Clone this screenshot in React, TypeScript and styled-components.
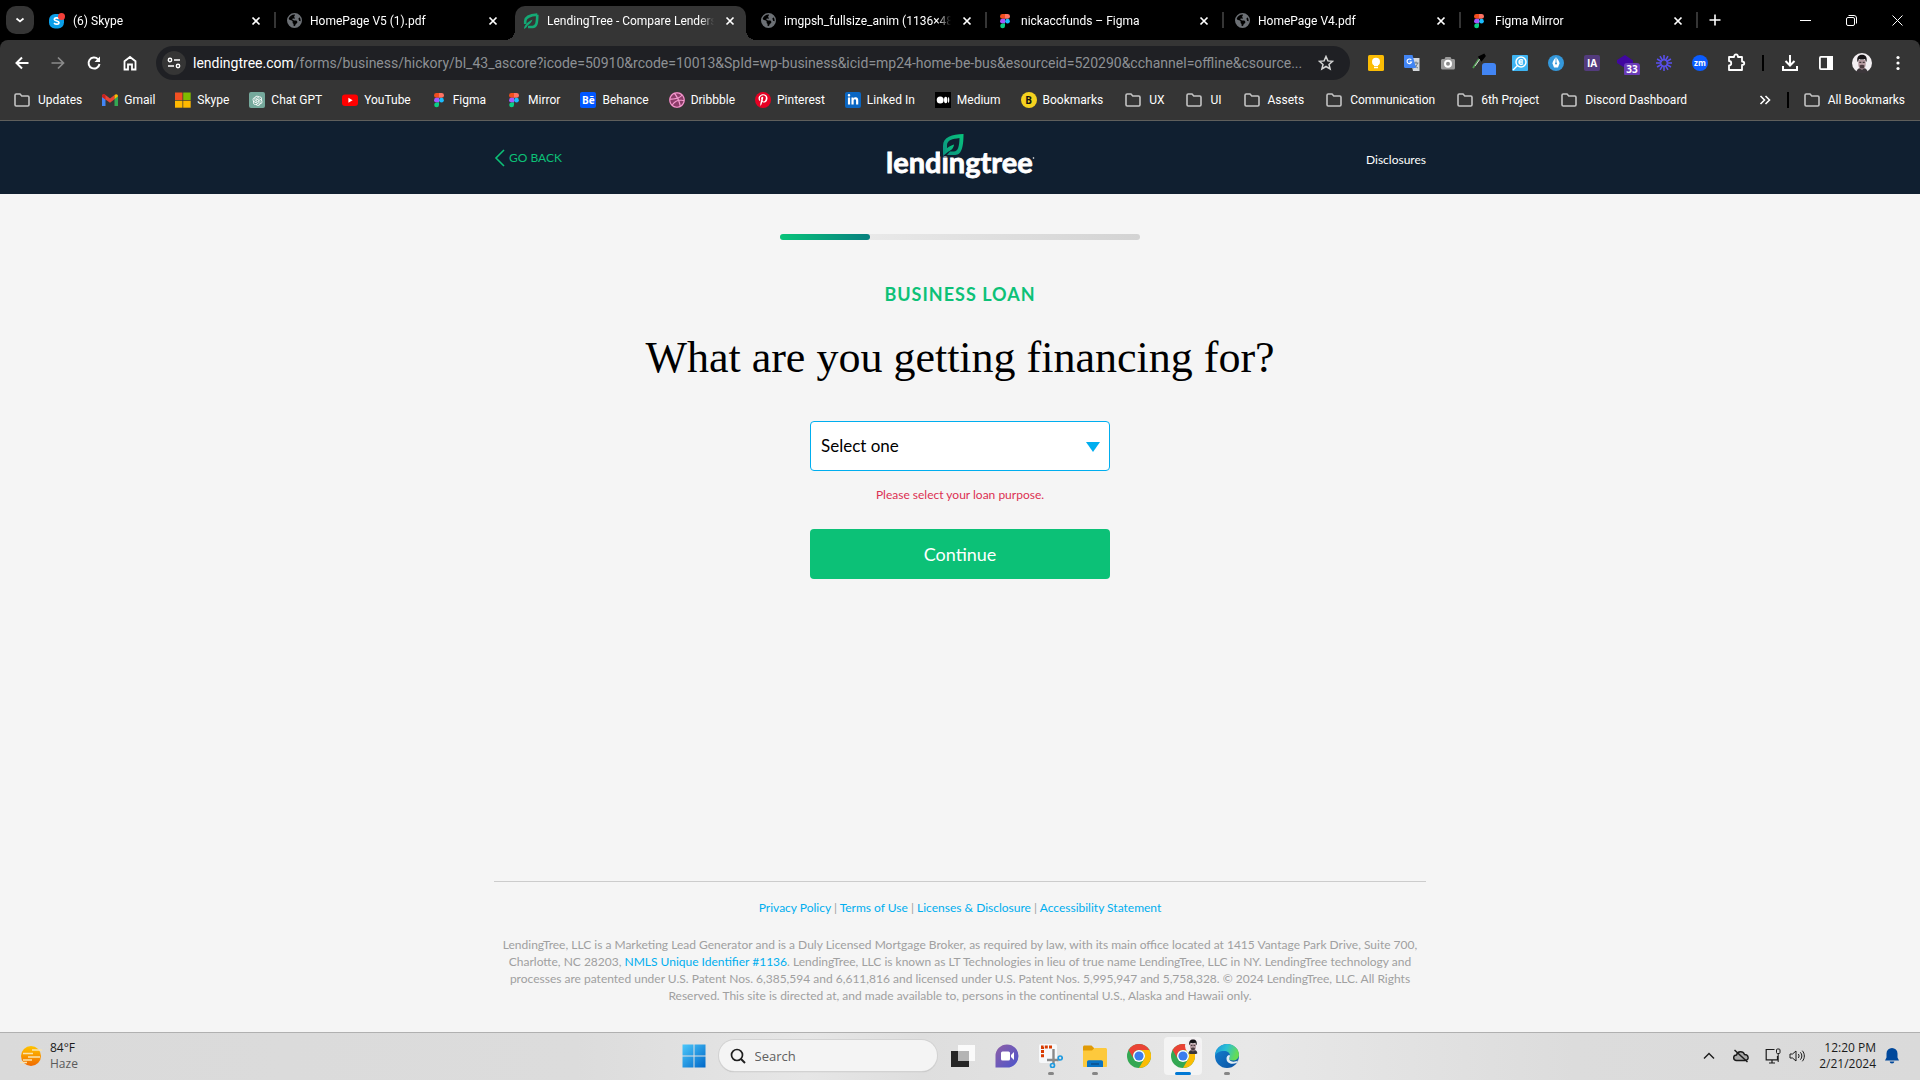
import React from "react";
import styled, { createGlobalStyle, css } from "styled-components";
import { FaDribbble, FaPinterestP, FaLinkedinIn, FaEarthAmericas } from "react-icons/fa6";
import { AiOutlineOpenAI } from "react-icons/ai";

const uiFont = `Roboto, "Open Sans", sans-serif`;
const osFont = `"Open Sans", "Noto Sans", sans-serif`;
const siteFont = `Lato, "Open Sans", sans-serif`;
const green = "#0cc177";
const blue = "#00aeef";

const GlobalStyle = createGlobalStyle`
  *, *::before, *::after { box-sizing: border-box; }
  body { margin: 0; background: #f5f5f5; }
  button { font: inherit; color: inherit; border: 0; padding: 0; background: none; cursor: pointer; }
  a { text-decoration: none; color: inherit; }
  svg { display: block; flex: none; }
`;

const Screen = styled.div`
  display: flex;
  flex-direction: column;
  min-height: 100vh;
`;

/* ---------- Browser chrome ---------- */

const Browser = styled.header`
  background: #000;
  color: #fff;
  font: 12px/16px ${uiFont};
  border-bottom: 1px solid #5f5f5c;
`;

const TabStrip = styled.div`
  display: flex;
  align-items: flex-end;
  height: 40px;
  padding-left: 6px;
`;

const TabSearch = styled.button`
  display: grid;
  place-items: center;
  width: 28px;
  height: 28px;
  margin: 0 7px 6px 0;
  border-radius: 10px;
  background: #353535;
`;

const Tab = styled.div<{ $active?: boolean }>`
  position: relative;
  display: flex;
  align-items: center;
  flex: 0 1 231px;
  min-width: 0;
  height: 34px;
  gap: 8px;
  padding: 0 8px 5px;
  ${(p) =>
    p.$active &&
    css`
      background: #353535;
      border-radius: 10px 10px 0 0;
      &::before,
      &::after {
        content: "";
        position: absolute;
        bottom: 0;
        width: 10px;
        height: 10px;
      }
      &::before {
        right: 100%;
        background: radial-gradient(circle at 0 0, transparent 10px, #353535 10px);
      }
      &::after {
        left: 100%;
        background: radial-gradient(circle at 100% 0, transparent 10px, #353535 10px);
      }
    `}
`;

const TabTitle = styled.span`
  flex: 1;
  min-width: 0;
  overflow: hidden;
  white-space: nowrap;
  mask-image: linear-gradient(to right, #000 calc(100% - 14px), transparent);
`;

const CloseTab = styled.button`
  display: grid;
  place-items: center;
  width: 16px;
  height: 16px;
`;

const TabDivider = styled.span<{ $hidden?: boolean }>`
  width: 2px;
  height: 16px;
  margin: 0 2px 12px;
  background: ${(p) => (p.$hidden ? "transparent" : "#353535")};
`;

const NewTab = styled.button`
  display: grid;
  place-items: center;
  width: 28px;
  height: 28px;
  margin: 0 0 6px 1px;
`;

const WindowControls = styled.div`
  display: flex;
  align-self: stretch;
  margin-left: auto;
`;

const WindowButton = styled.button`
  display: grid;
  place-items: center;
  width: 46px;
`;

const Panel = styled.div`
  background: #353535;
  border-radius: 8px 8px 0 0;
`;

const Toolbar = styled.div`
  display: flex;
  align-items: center;
  height: 46px;
  padding: 0 4px;
`;

const ToolButton = styled.button`
  display: grid;
  place-items: center;
  flex: none;
  width: 36px;
  height: 34px;
`;

const Omnibox = styled.div`
  display: flex;
  align-items: center;
  flex: 1;
  min-width: 0;
  height: 34px;
  margin: 0 8px;
  padding: 0 6px;
  border-radius: 17px;
  background: #1f2024;
`;

const SiteChip = styled.button`
  display: grid;
  place-items: center;
  flex: none;
  width: 24px;
  height: 24px;
  margin-right: 7px;
  border-radius: 12px;
  background: #353535;
`;

const Address = styled.div`
  flex: 1;
  min-width: 0;
  overflow: hidden;
  text-overflow: ellipsis;
  white-space: nowrap;
  font-size: 14px;
  line-height: 20px;
  color: #8d9094;
  b {
    font-weight: 400;
    color: #fff;
  }
`;

const ToolDivider = styled.span`
  width: 2px;
  height: 16px;
  margin: 0 8px;
  background: #000;
`;

const BookmarkBar = styled.nav`
  display: flex;
  align-items: center;
  height: 34px;
  padding: 0 5px 6px 2px;
`;

const Bookmark = styled.a<{ $folder?: boolean }>`
  display: flex;
  align-items: center;
  gap: ${(p) => (p.$folder ? 8 : 6)}px;
  padding: ${(p) => (p.$folder ? "0 10px 0 12px" : "0 10px")};
  white-space: nowrap;
`;

const BarEnd = styled.div`
  display: flex;
  align-items: center;
  margin-left: auto;
`;

const BarDivider = styled(ToolDivider)`
  margin: 0 3px 0 16px;
`;

const Tile = styled.span<{ $bg: string; $round?: boolean; $fg?: string }>`
  display: grid;
  place-items: center;
  width: 16px;
  height: 16px;
  border-radius: ${(p) => (p.$round ? 8 : 2)}px;
  background: ${(p) => p.$bg};
  color: ${(p) => p.$fg ?? "#fff"};
  font: 700 10px/16px ${osFont};
`;

/* ---------- Site ---------- */

const SiteHeader = styled.header`
  display: flex;
  justify-content: center;
  background: #101f30;
`;

const HeaderInner = styled.div`
  display: grid;
  grid-template-columns: 1fr auto 1fr;
  align-items: center;
  width: 100%;
  max-width: 932px;
  height: 73px;
  font: 12px/16px ${siteFont};
  color: #fff;
`;

const GoBack = styled.button`
  display: flex;
  align-items: center;
  justify-self: start;
  gap: 4px;
  color: ${green};
`;

const Disclosures = styled.a`
  justify-self: end;
  padding-top: 4px;
`;

const Main = styled.main`
  display: flex;
  flex-direction: column;
  align-items: center;
  flex: 1;
  padding: 40px 16px;
  background: #f5f5f5;
  font-family: ${siteFont};
`;

const Progress = styled.div`
  width: 100%;
  max-width: 360px;
  height: 6px;
  border-radius: 3px;
  background: linear-gradient(to right, #f0f0f0, #d3d3d3);
`;

const ProgressFill = styled.div`
  height: 100%;
  border-radius: 3px;
  background: linear-gradient(to right, #08c47a, #08807f);
`;

const Kicker = styled.p`
  margin: 42px 0 0;
  font-size: 18px;
  line-height: 24px;
  font-weight: 700;
  letter-spacing: 1px;
  color: ${green};
`;

const Question = styled.h1`
  margin: 26px 0 0;
  font: 400 44px/52px "Liberation Serif", serif;
  color: #000;
  text-align: center;
`;

const Form = styled.form`
  display: flex;
  flex-direction: column;
  width: 100%;
  max-width: 300px;
  margin-top: 37px;
`;

const SelectWrap = styled.label`
  position: relative;
  display: block;
  &::after {
    content: "";
    position: absolute;
    top: 21px;
    right: 10px;
    border: solid transparent;
    border-width: 10px 7px 0;
    border-top-color: ${blue};
    pointer-events: none;
  }
`;

const Purpose = styled.select`
  appearance: none;
  width: 100%;
  height: 50px;
  padding: 0 10px;
  border: 1px solid ${blue};
  border-radius: 4px;
  background: #fff;
  color: #000;
  font: 17px/24px ${siteFont};
`;

const ErrorText = styled.p`
  margin: 14px 0 24px;
  font-size: 12px;
  line-height: 20px;
  text-align: center;
  color: #dc3052;
`;

const Continue = styled.button`
  height: 50px;
  border-radius: 4px;
  background: ${green};
  color: #fff;
  font: 18px/24px ${siteFont};
`;

const Footer = styled.footer`
  width: 100%;
  max-width: 932px;
  padding: 17px 8px 28px;
  border-top: 1px solid #ccc;
  font: 12px/17px ${siteFont};
  color: #a0a0a0;
  text-align: center;
  p {
    margin: 20px 0 0;
  }
  a {
    color: ${blue};
  }
`;

const FooterWrap = styled.div`
  display: flex;
  justify-content: center;
  background: #f5f5f5;
`;

/* ---------- Taskbar ---------- */

const Taskbar = styled.footer`
  display: grid;
  grid-template-columns: 1fr auto 1fr;
  align-items: center;
  height: 48px;
  padding: 0 20px 2px;
  border-top: 1px solid #b0b0b0;
  background: linear-gradient(to right, #dadada 0%, #dcdcdc 30%, #e6e6e6 42%, #dedede 48%, #e8e8e8 65%, #dcdcdc 82%, #dadada 100%);
  font: 12px/16px ${osFont};
  color: #1b1b1b;
`;

const Weather = styled.button`
  display: flex;
  align-items: center;
  justify-self: start;
  gap: 8px;
  text-align: left;
`;

const Line = styled.span<{ $muted?: boolean }>`
  display: block;
  color: ${(p) => (p.$muted ? "#5a5a5a" : "inherit")};
`;

const Dock = styled.div`
  display: flex;
  align-items: center;
`;

const AppButton = styled.button<{ $open?: boolean; $active?: boolean }>`
  position: relative;
  display: grid;
  place-items: center;
  width: 38px;
  height: 38px;
  margin: 0 3px;
  border-radius: 4px;
  background: ${(p) => (p.$active ? "#f4f4f4" : "none")};
  &::after {
    content: "";
    position: absolute;
    bottom: 0;
    width: ${(p) => (p.$active ? 16 : 6)}px;
    height: 3px;
    border-radius: 2px;
    background: ${(p) => (p.$active ? "#0078d4" : p.$open ? "#868686" : "none")};
  }
`;

const SearchBox = styled.label`
  display: flex;
  align-items: center;
  gap: 9px;
  width: 218px;
  height: 31px;
  margin: 0 4px 0 3px;
  padding: 0 11px;
  border-radius: 16px;
  background: #f4f4f4;
  box-shadow: 0 0 0 1px #d2d2d2, 0 1px 1px #aaa;
  input {
    width: 100%;
    min-width: 0;
    padding: 0;
    border: 0;
    outline: 0;
    background: none;
    font: 13px/20px ${osFont};
    color: #1b1b1b;
  }
  input::placeholder {
    color: #606060;
    opacity: 1;
  }
`;

const Tray = styled.div`
  display: flex;
  align-items: center;
  justify-self: end;
`;

const TrayButton = styled.button<{ $narrow?: boolean }>`
  display: grid;
  place-items: center;
  width: ${(p) => (p.$narrow ? 16 : 32)}px;
  height: 32px;
`;

const Clock = styled.button`
  margin: 0 8px 0 14px;
  text-align: right;
`;

const ProfiledApp = styled.span`
  position: relative;
  svg + svg {
    position: absolute;
    top: -6px;
    right: -6px;
  }
`;

/* ---------- Icons ---------- */

type IconProps = { s?: number; box?: string; children: React.ReactNode };
const Icon = ({ s = 16, box = "0 0 16 16", children }: IconProps) => (
  <svg width={s} height={s} viewBox={box} fill="none" aria-hidden="true">
    {children}
  </svg>
);

const FolderIcon = () => (
  <Icon>
    <path d="M1 3.200C1 2.500 1.500 2 2.200 2H6l1.800 2h6c.7 0 1.200.5 1.200 1.200V12.800c0 .7-.5 1.200-1.200 1.200H2.200C1.500 14 1 13.500 1 12.800Z" stroke="#c4c4c4" strokeWidth="1.600" />
  </Icon>
);

const FigmaIcon = () => (
  <Icon>
    <path d="M5.400 1H8v4.800H5.400a2.400 2.400 0 0 1 0-4.800Z" fill="#f24e1e" />
    <path d="M8 1h2.600a2.400 2.400 0 0 1 0 4.800H8Z" fill="#ff7262" />
    <path d="M5.400 5.800H8v4.700H5.400a2.350 2.350 0 0 1 0-4.700Z" fill="#a259ff" />
    <circle cx="10.500" cy="8.150" r="2.350" fill="#1abcfe" />
    <path d="M5.400 10.500H8v2.400a2.400 2.400 0 1 1-2.600-2.400Z" fill="#0acf83" />
  </Icon>
);

const GlobeIcon = () => (
  <Tile $bg="#000" $round $fg="#6c7075">
    <FaEarthAmericas size={15} />
  </Tile>
);

const LeafIcon = () => (
  <Icon>
    <path d="M14.300 1.600C8 2 2.500 3 2.200 8v3M5 14h4.500c4.200 0 4.600-4 4.800-12.400" stroke="#14a975" strokeWidth="2.600" />
    <path d="M1 16c.2-4 3.500-7 8.500-9.500C8.500 9.500 7 11 4.500 12.500 4 14 3 15 1 16Z" fill="#14a975" />
  </Icon>
);

const SkypeTabIcon = () => (
  <Icon>
    <rect x="0" y="1" width="15" height="14.500" rx="6" fill="#0a9ee8" />
    <path d="M10 5.700C8.500 4.400 5.200 4.700 5.300 6.500c.1 1.900 4.700 1.200 4.700 3.200 0 1.900-3.400 1.900-5 .4" stroke="#fff" strokeWidth="1.700" />
    <circle cx="12.500" cy="3.500" r="3.500" fill="#f4403a" />
  </Icon>
);

const GmailIcon = () => (
  <Icon>
    <path d="M0 3.500V14h3.500V7Z" fill="#4285f4" />
    <path d="M16 3.500V14h-3.500V7Z" fill="#34a853" />
    <path d="M0 4.500C0 2 2 1.700 3.500 3L8 6.500 12.500 3v4.300L8 10.800 0 5Z" fill="#ea4335" />
    <path d="M12.500 3C14 1.700 16 2.200 16 4.300L12.500 7.300Z" fill="#fbbc04" />
    <path d="M0 4.300v.8l3.500 2.500V3C2 1.800 0 2.300 0 4.300Z" fill="#c5221f" />
  </Icon>
);

const MicrosoftIcon = () => (
  <Icon>
    <path d="M0 .5h7.500V8H0Z" fill="#f25022" />
    <path d="M8.200.5h7.500V8H8.200Z" fill="#7fba00" />
    <path d="M0 8.700h7.500v7H0Z" fill="#ffb900" />
    <path d="M8.200 8.700h7.500v7H8.200Z" fill="#ffb900" />
  </Icon>
);

const YoutubeIcon = () => (
  <Icon>
    <rect y="2.500" width="16" height="11.500" rx="3" fill="#f00" />
    <path d="M6.400 5.800v5l4.200-2.500Z" fill="#fff" />
  </Icon>
);

const MediumIcon = () => (
  <Icon>
    <path d="M0 0h16v16H0Z" fill="#000" />
    <circle cx="5.200" cy="8" r="3.500" fill="#fff" />
    <ellipse cx="10.700" cy="8" rx="1.700" ry="3.300" fill="#fff" />
    <ellipse cx="13.600" cy="8" rx=".7" ry="3" fill="#fff" />
  </Icon>
);

const Avatar = ({ s = 20 }: { s?: number }) => (
  <Icon s={s} box="0 0 20 20">
    <circle cx="10" cy="10" r="10" fill="#f3eff2" />
    <path d="M4.500 19C5 15.500 7 15 10 15s5 .5 5.500 4A10 10 0 0 1 4.500 19Z" fill="#3b363a" />
    <path d="M6.300 7h7.400v4.500c0 2.500-1.700 5-3.700 5s-3.700-2.500-3.700-5Z" fill="#b59aa0" />
    <path d="M5.500 9C4.500 4 6.500 1.800 10 1.800S15.500 4 14.500 9c-.8-.7-1-2.200-1.500-3-2 .7-4.500.7-6 0-.5 1-.7 2.300-1.500 3Z" fill="#161316" />
    <path d="M7.500 12.500c1.500-1 3.500-1 5 0l-.7 3h-3.600Z" fill="#4b3b40" />
    <path d="M7.300 9.300h2M10.700 9.300h2" stroke="#2b2024" />
  </Icon>
);

const ChromeIcon = () => (
  <Icon s={24} box="0 0 24 24">
    <circle cx="12" cy="12" r="12" fill="#34a853" />
    <path d="M1.600 6A12 12 0 0 1 22.400 6H12a6 6 0 0 0-5.200 9Z" fill="#ea4335" />
    <path d="M22.400 6A12 12 0 0 1 12 24l5.200-9A6 6 0 0 0 17.200 9 6 6 0 0 0 12 6Z" fill="#fbbc04" />
    <circle cx="12" cy="12" r="6" fill="#fff" />
    <circle cx="12" cy="12" r="4.600" fill="#3b7ded" />
  </Icon>
);

const CloseGlyph = () => (
  <Icon s={10} box="0 0 10 10">
    <path d="m1.500 1.500 7 7m0-7-7 7" stroke="#fff" strokeWidth="1.700" />
  </Icon>
);

const Logo = () => (
  <svg width="152" height="54" viewBox="0 0 152 54" role="img" aria-label="lendingtree">
    <defs>
      <linearGradient id="leaf" x1="1" y1="0" x2="0" y2="1">
        <stop offset="0" stopColor="#08c57c" />
        <stop offset="1" stopColor="#0c8f80" />
      </linearGradient>
    </defs>
    <text x="2" y="42" fontFamily="Lato" fontWeight="700" fontSize="29" fill="#fff" stroke="#fff" strokeWidth=".8">
      lendingtree
    </text>
    <path d="M56 15h9v10.500H56Z" fill="#101f30" />
    <path d="M79.500 3C79.500 13 78.500 24 71 24H63l3-3.500h4c4 0 5.300-5 5.500-13.500C68 8 63.500 9 63 14v5L59 24V15C59 5.500 68 3.500 79.500 3Z" fill="url(#leaf)" />
    <path d="M59 25c.5-5.500 4-9 11-11.500-.5 4-2.500 5.500-5.500 7Z" fill="url(#leaf)" />
    <circle cx="149.500" cy="27" r=".8" fill="#fff" />
  </svg>
);

/* ---------- Data ---------- */

const tabs = [
  { title: "(6) Skype", icon: <SkypeTabIcon /> },
  { title: "HomePage V5 (1).pdf", icon: <GlobeIcon /> },
  { title: "LendingTree - Compare Lenders", icon: <LeafIcon />, active: true },
  { title: "imgpsh_fullsize_anim (1136×48", icon: <GlobeIcon /> },
  { title: "nickaccfunds – Figma", icon: <FigmaIcon /> },
  { title: "HomePage V4.pdf", icon: <GlobeIcon /> },
  { title: "Figma Mirror", icon: <FigmaIcon /> },
];

const bookmarks: { name: string; icon?: React.ReactNode }[] = [
  { name: "Updates" },
  { name: "Gmail", icon: <GmailIcon /> },
  { name: "Skype", icon: <MicrosoftIcon /> },
  { name: "Chat GPT", icon: <Tile $bg="#75a99c"><AiOutlineOpenAI size={13} /></Tile> },
  { name: "YouTube", icon: <YoutubeIcon /> },
  { name: "Figma", icon: <FigmaIcon /> },
  { name: "Mirror", icon: <FigmaIcon /> },
  { name: "Behance", icon: <Tile $bg="#0057ff">Bē</Tile> },
  { name: "Dribbble", icon: <Tile $bg="#8c3b68" $round $fg="#f59bd0"><FaDribbble size={16} /></Tile> },
  { name: "Pinterest", icon: <Tile $bg="#e60023" $round><FaPinterestP size={12} /></Tile> },
  { name: "Linked In", icon: <Tile $bg="#0a66c2"><FaLinkedinIn size={12} /></Tile> },
  { name: "Medium", icon: <MediumIcon /> },
  { name: "Bookmarks", icon: <Tile $bg="#f5d21f" $round $fg="#111">B</Tile> },
  { name: "UX" },
  { name: "UI" },
  { name: "Assets" },
  { name: "Communication" },
  { name: "6th Project" },
  { name: "Discord Dashboard" },
];

const rays = Array.from({ length: 12 }, (_, i) => i * 30);

const extensions: { name: string; icon: React.ReactNode }[] = [
  {
    name: "Keep",
    icon: (
      <Icon>
        <rect width="16" height="16" rx="1.500" fill="#fbbc04" />
        <circle cx="8" cy="6.800" r="4" fill="#fff" />
        <path d="M6 10h4v1.200H6ZM6 12h4v1.200H6Z" fill="#fff" />
      </Icon>
    ),
  },
  {
    name: "Translate",
    icon: (
      <Icon>
        <path d="M6 3h9.500v13H9Z" fill="#d5d8dc" />
        <path d="M9 8h5.500M12 6.500V8m1.500 0c-.5 2.500-2 4-4 5M10.500 9.500c.7 1.500 2 3 3.500 3.500" stroke="#6b7a86" />
        <path d="M0 0h8.500L12 13H1.200C.5 13 0 12.500 0 11.800Z" fill="#4285f4" />
        <path d="M7.300 5A2.300 2.300 0 1 0 7.600 7H5.500" stroke="#fff" strokeWidth="1.100" />
      </Icon>
    ),
  },
  {
    name: "Screenshot",
    icon: (
      <Icon>
        <path d="M1 5.500C1 4.600 1.700 4 2.500 4h2L5.500 2h5l1 2h2c.9 0 1.500.6 1.500 1.500V13c0 .9-.6 1.500-1.500 1.500h-11C1.600 14.500 1 13.900 1 13Z" fill="#9a9a9a" />
        <circle cx="8" cy="8.700" r="4" fill="#fff" />
        <circle cx="8" cy="8.700" r="2" fill="#8b8b8b" />
      </Icon>
    ),
  },
  {
    name: "Color picker",
    icon: (
      <Icon s={24} box="0 0 24 24">
        <path d="m1 17 6-9" stroke="#4d9a4f" strokeWidth="1.800" />
        <path d="m3 15 5-7" stroke="#d0d0d0" />
        <path d="m7 6 5-2.500L13 5l-3.500 4.500Z" fill="#000" stroke="#000" strokeWidth="1.500" />
        <rect x="10" y="12" width="14" height="14" rx="3" fill="#4285f4" />
      </Icon>
    ),
  },
  {
    name: "Page search",
    icon: (
      <Icon>
        <rect width="16" height="16" rx="1" fill="#3eb4f2" />
        <circle cx="9" cy="7" r="5" stroke="#fff" strokeWidth="1.500" />
        <path d="M5.500 10.500 1 15M11 5.300c-2-1.300-4-.3-4 1.700s2 3 4 1.600M7 7h4" stroke="#fff" strokeWidth="1.400" />
      </Icon>
    ),
  },
  {
    name: "Pen",
    icon: (
      <Icon>
        <circle cx="8" cy="8" r="8" fill="#3498db" />
        <path d="M8 2c2 2.500 3.500 4.500 3.500 6.500L10 12.500H6L4.500 8.500C4.500 6.500 6 4.500 8 2Z" fill="#fff" />
        <path d="M8 2v6" stroke="#3498db" strokeWidth=".8" />
        <circle cx="8" cy="8.500" r="1" fill="#3498db" />
      </Icon>
    ),
  },
  { name: "IA", icon: <Tile $bg="#533b7d">IA</Tile> },
  {
    name: "Layers",
    icon: (
      <Icon s={24} box="0 0 24 24">
        <path d="m9 4 8 5.500v3L9 17l-8-5v-3Z" fill="#4007a0" />
        <rect x="8" y="12" width="16" height="13" rx="3" fill="#6a3cb8" />
        <text x="16" y="22" textAnchor="middle" fontFamily="Open Sans" fontWeight="700" fontSize="10" fill="#fff">33</text>
      </Icon>
    ),
  },
  {
    name: "Loom",
    icon: (
      <Icon>
        {rays.map((a) => (
          <path key={a} d="M8 0v5" stroke="#5a50f0" strokeWidth="1.500" transform={`rotate(${a} 8 8)`} />
        ))}
        <circle cx="8" cy="8" r="3.200" stroke="#5a50f0" strokeWidth="1.200" />
      </Icon>
    ),
  },
  {
    name: "Zoom",
    icon: (
      <Icon>
        <circle cx="8" cy="8" r="8" fill="#0b5cff" />
        <text x="8" y="10.500" textAnchor="middle" fontFamily="Open Sans" fontWeight="700" fontSize="8" fill="#fff">zm</text>
      </Icon>
    ),
  },
  {
    name: "Extensions",
    icon: (
      <Icon s={20} box="0 0 20 20">
        <path d="M3 4h5c0-3.500 4-3.500 4 0h4v4.500c3 0 3 3.500 0 3.500v5H3v-4.500c3 0 3-4.500 0-4.500Z" stroke="#fff" strokeWidth="1.800" strokeLinejoin="round" />
      </Icon>
    ),
  },
];

const legalLinks = ["Privacy Policy", "Terms of Use", "Licenses & Disclosure", "Accessibility Statement"];

/* ---------- Sections ---------- */

const BrowserChrome = () => (
  <Browser>
    <TabStrip>
      <TabSearch aria-label="Search tabs">
        <Icon s={10} box="0 0 10 10"><path d="m1.500 3.500 3.500 3 3.500-3" stroke="#fff" strokeWidth="1.700" /></Icon>
      </TabSearch>
      {tabs.map((t, i) => (
        <React.Fragment key={t.title}>
          <Tab $active={t.active}>
            {t.icon}
            <TabTitle>{t.title}</TabTitle>
            <CloseTab aria-label={`Close ${t.title}`}><CloseGlyph /></CloseTab>
          </Tab>
          <TabDivider $hidden={t.active || tabs[i + 1]?.active} />
        </React.Fragment>
      ))}
      <NewTab aria-label="New tab">
        <Icon s={12} box="0 0 12 12"><path d="M6 .5v11M.5 6h11" stroke="#fff" strokeWidth="1.600" /></Icon>
      </NewTab>
      <WindowControls>
        <WindowButton aria-label="Minimize"><Icon s={11} box="0 0 11 11"><path d="M0 5.500h11" stroke="#fff" /></Icon></WindowButton>
        <WindowButton aria-label="Restore">
          <Icon s={11} box="0 0 11 11">
            <rect x=".5" y="2.500" width="8" height="8" rx="1.500" stroke="#fff" />
            <path d="M2.500.5H8A2.500 2.500 0 0 1 10.500 3v5.500" stroke="#fff" />
          </Icon>
        </WindowButton>
        <WindowButton aria-label="Close"><Icon s={11} box="0 0 11 11"><path d="m.5.5 10 10m0-10-10 10" stroke="#fff" /></Icon></WindowButton>
      </WindowControls>
    </TabStrip>
    <Panel>
      <Toolbar>
        <ToolButton aria-label="Back"><Icon><path d="M14.500 8H2.500M8 2.500 2.500 8 8 13.500" stroke="#fff" strokeWidth="2" /></Icon></ToolButton>
        <ToolButton aria-label="Forward"><Icon><path d="M1.500 8h12M8 2.500 13.500 8 8 13.500" stroke="#8b8b8b" strokeWidth="1.700" /></Icon></ToolButton>
        <ToolButton aria-label="Reload">
          <Icon><path d="M13.500 9A5.500 5.500 0 1 1 12 4.200L13 5.500" stroke="#fff" strokeWidth="2" /><path d="M14 1.500v5.500H8.500Z" fill="#fff" /></Icon>
        </ToolButton>
        <ToolButton aria-label="Home"><Icon><path d="M2.500 14.500V6.300L8 2l5.500 4.300v8.200H10V9.500H6v5Z" stroke="#fff" strokeWidth="1.800" /></Icon></ToolButton>
        <Omnibox>
          <SiteChip aria-label="View site information">
            <Icon s={14} box="0 0 14 14"><circle cx="3" cy="4" r="1.700" stroke="#fff" strokeWidth="1.400" /><path d="M7 4h6M1 10h6" stroke="#fff" strokeWidth="1.600" /><circle cx="11" cy="10" r="1.700" stroke="#fff" strokeWidth="1.400" /></Icon>
          </SiteChip>
          <Address role="textbox" aria-label="Address">
            <b>lendingtree.com</b>/forms/business/hickory/bl_43_ascore?icode=50910&amp;rcode=10013&amp;SpId=wp-business&amp;icid=mp24-home-be-bus&amp;esourceid=520290&amp;cchannel=offline&amp;csource...
          </Address>
          <ToolButton aria-label="Bookmark this page">
            <Icon><path d="m8 1.500 1.900 4.400 4.600.4-3.500 3.100 1.100 4.600L8 11.500 3.900 14 5 9.400 1.500 6.300l4.600-.4Z" stroke="#d4d4d4" strokeWidth="1.500" /></Icon>
          </ToolButton>
        </Omnibox>
        {extensions.map((e) => (
          <ToolButton key={e.name} aria-label={e.name}>{e.icon}</ToolButton>
        ))}
        <ToolDivider />
        <ToolButton aria-label="Downloads"><Icon><path d="M8 0v10M3.500 6 8 10.500 12.500 6M1 11v4h14v-4" stroke="#fff" strokeWidth="2" /></Icon></ToolButton>
        <ToolButton aria-label="Side panel">
          <Icon><rect x="1.900" y="1.900" width="12.200" height="12.200" rx="1" stroke="#fff" strokeWidth="1.800" /><path d="M9 1h6v14H9Z" fill="#fff" /></Icon>
        </ToolButton>
        <ToolButton aria-label="Profile"><Avatar /></ToolButton>
        <ToolButton aria-label="Menu">
          <Icon><g fill="#fff"><circle cx="8" cy="2.500" r="1.600" /><circle cx="8" cy="8" r="1.600" /><circle cx="8" cy="13.500" r="1.600" /></g></Icon>
        </ToolButton>
      </Toolbar>
      <BookmarkBar>
        {bookmarks.map((b) => (
          <Bookmark key={b.name} href="#" $folder={!b.icon}>{b.icon ?? <FolderIcon />}{b.name}</Bookmark>
        ))}
        <BarEnd>
          <button aria-label="More bookmarks">
            <Icon s={12} box="0 0 12 12"><path d="m1.500 2 4 4-4 4m5-8 4 4-4 4" stroke="#fff" strokeWidth="1.600" /></Icon>
          </button>
          <BarDivider />
          <Bookmark href="#" $folder><FolderIcon />All Bookmarks</Bookmark>
        </BarEnd>
      </BookmarkBar>
    </Panel>
  </Browser>
);

const DesktopTaskbar = () => (
  <Taskbar>
    <Weather>
      <Icon s={22} box="0 0 22 22">
        <defs><linearGradient id="sun" x1="0" y1="0" x2="0" y2="1"><stop offset="0" stopColor="#ffc400" /><stop offset="1" stopColor="#f06a00" /></linearGradient></defs>
        <circle cx="11" cy="11" r="10" fill="url(#sun)" />
        <path d="M12 5h10M3 8.500h10M8 12h12M3 15h9M0 17.500h7" stroke="#f9e3ae" strokeWidth="1.700" />
      </Icon>
      <span><Line>84°F</Line><Line $muted>Haze</Line></span>
    </Weather>
    <Dock>
      <AppButton aria-label="Start">
        <Icon s={24} box="0 0 24 24">
          <defs><linearGradient id="win" x1="0" y1="0" x2="1" y2="1"><stop offset="0" stopColor="#4cc8fb" /><stop offset="1" stopColor="#0067c8" /></linearGradient></defs>
          <path d="M.5.5h11v11H.5Zm12 0h11v11h-11ZM.5 12.500h11v11H.5Zm12 0h11v11h-11Z" fill="url(#win)" />
        </Icon>
      </AppButton>
      <SearchBox>
        <Icon s={16}><circle cx="7" cy="7" r="5.500" stroke="#1f1f1f" strokeWidth="1.700" /><path d="m11 11 4 4" stroke="#1f1f1f" strokeWidth="2" /></Icon>
        <input type="text" placeholder="Search" aria-label="Search" />
      </SearchBox>
      <AppButton aria-label="Task view">
        <Icon s={24} box="0 0 24 24">
          <path d="M7 1h17v16H7Z" fill="#fafafa" />
          <path d="M0 7h18v16H0Z" fill="#262626" />
          <path d="M7 7h11v10H7Z" fill="#b4b4b4" />
        </Icon>
      </AppButton>
      <AppButton aria-label="Chat">
        <Icon s={24} box="0 0 24 24">
          <defs><linearGradient id="chat" x1="0" y1="0" x2="1" y2="1"><stop offset="0" stopColor="#8f5fa6" /><stop offset="1" stopColor="#4b55cc" /></linearGradient></defs>
          <path d="M.5 23.500V12A11.500 11.500 0 1 1 12 23.500Z" fill="url(#chat)" />
          <rect x="6" y="7.500" width="9" height="9" rx="1.500" fill="#fff" />
          <path d="m16 11 3-3v8l-3-3Z" fill="#fff" />
        </Icon>
      </AppButton>
      <AppButton $open aria-label="Snipping Tool">
        <Icon s={24} box="0 0 24 24">
          <rect width="18" height="19" rx="2" fill="#f6f8fa" />
          <path d="M13 3H3.500v11.500" stroke="#d83b01" strokeWidth="3" strokeDasharray="3 1.200" />
          <path d="M14.500 5v11h5M14.500 16v4M8 16h7" stroke="#8a8a8a" strokeWidth="2.400" />
          <circle cx="21.200" cy="14" r="2" stroke="#1e9ae0" strokeWidth="1.700" />
          <circle cx="13.500" cy="21.500" r="2" stroke="#1e9ae0" strokeWidth="1.700" />
        </Icon>
      </AppButton>
      <AppButton $open aria-label="File Explorer">
        <Icon s={24} box="0 0 24 24">
          <path d="M0 3c0-.8.7-1.500 1.500-1.500h7L11 4v3H0Z" fill="#e09a06" />
          <path d="M0 6.500h9L11.500 4H22.500c.8 0 1.500.7 1.500 1.500v16.500c0 .6-.4 1-1 1H1c-.6 0-1-.4-1-1Z" fill="#fdc93c" />
          <path d="M4 23v-5c0-1 .7-1.700 1.700-1.700h12.600c1 0 1.700.7 1.700 1.700v5Z" fill="#0a74c4" />
          <path d="M8 20h8" stroke="#0c4f8b" strokeWidth="1.500" />
        </Icon>
      </AppButton>
      <AppButton aria-label="Chrome"><ChromeIcon /></AppButton>
      <AppButton $active aria-label="Chrome, work profile">
        <ProfiledApp><ChromeIcon /><Avatar s={16} /></ProfiledApp>
      </AppButton>
      <AppButton $open aria-label="Edge">
        <Icon s={24} box="0 0 24 24">
          <defs>
            <linearGradient id="edgeTop" x1="0" y1="0" x2="1" y2=".3"><stop offset="0" stopColor="#1a93dc" /><stop offset=".5" stopColor="#2bc0d4" /><stop offset="1" stopColor="#66dc55" /></linearGradient>
            <linearGradient id="edgeLow" x1="0" y1="0" x2="1" y2="1"><stop offset="0" stopColor="#1583d4" /><stop offset="1" stopColor="#0b4f9e" /></linearGradient>
          </defs>
          <circle cx="12" cy="12" r="12" fill="url(#edgeLow)" />
          <path d="M0 12C0 5 5.500 0 12 0s12 5 12 10.500c0 4-3 6-6 6-2.500 0-4-.8-4-2 0-.8 1-1.200 1-2.800C15 9 12.500 7 9 7 4.500 7 1 9 0 12Z" fill="url(#edgeTop)" />
          <path d="M14.200 15c.5 3 6 3.500 9 1.200-.4 1-1 2-1.700 2.800-4 1.500-10 1-10-4.500 0-1.800 1-3.200 2.500-3.500 2 .5.2 2 .2 4Z" fill="#e4eef4" />
        </Icon>
      </AppButton>
    </Dock>
    <Tray>
      <TrayButton aria-label="Show hidden icons"><Icon s={12} box="0 0 12 12"><path d="m1 8.500 5-5 5 5" stroke="#1b1b1b" strokeWidth="1.400" /></Icon></TrayButton>
      <TrayButton aria-label="OneDrive">
        <Icon><path d="M3.500 12.500c-4-.5-3.500-5.500 0-5.500C4.500 3 10 2.500 11.500 6.500c4.500 0 5 6 .5 6Z" fill="#a8a8a8" stroke="#1b1b1b" strokeWidth="1.400" /><path d="m1.500 2 13 12" stroke="#1b1b1b" strokeWidth="1.500" /></Icon>
      </TrayButton>
      <TrayButton aria-label="Network">
        <Icon><path d="M9.500 1.500H1.200v10.300h11.300V8M4 15h6M7 12v3" stroke="#1b1b1b" strokeWidth="1.200" /><rect x="11.500" y="1" width="3.500" height="4.500" rx="1" stroke="#1b1b1b" /><path d="M13.200 5.500V14" stroke="#1b1b1b" /></Icon>
      </TrayButton>
      <TrayButton $narrow aria-label="Volume">
        <Icon><path d="M1 6h2.500L7 3v10L3.500 10H1Z" stroke="#1b1b1b" /><path d="M9.300 6c1 1.200 1 2.800 0 4M11.300 4.300c2 2 2 5.400 0 7.400M13.300 2.700c2.700 3 2.700 7.600 0 10.600" stroke="#1b1b1b" /></Icon>
      </TrayButton>
      <Clock><Line>12:20 PM</Line><Line>2/21/2024</Line></Clock>
      <button aria-label="Notifications">
        <Icon><path d="M8 0a5.500 5.500 0 0 1 5.500 5.500V9.500l1.500 3H1l1.500-3v-4A5.500 5.500 0 0 1 8 0Z" fill="#00489b" /><path d="M5.700 13.500h4.600a2.300 2 0 0 1-4.600 0Z" fill="#00489b" /></Icon>
      </button>
    </Tray>
  </Taskbar>
);

export default function App() {
  return (
    <Screen>
      <GlobalStyle />
      <BrowserChrome />
      <SiteHeader>
        <HeaderInner>
          <GoBack>
            <svg width="11" height="18" viewBox="0 0 11 18" fill="none" aria-hidden="true"><path d="M10 1 2 9l8 8" stroke={green} strokeWidth="1.600" /></svg>
            GO BACK
          </GoBack>
          <a href="#"><Logo /></a>
          <Disclosures href="#">Disclosures</Disclosures>
        </HeaderInner>
      </SiteHeader>
      <Main>
        <Progress role="progressbar" aria-valuenow={25} aria-label="Form progress"><ProgressFill style={{ width: "25%" }} /></Progress>
        <Kicker>BUSINESS LOAN</Kicker>
        <Question id="question">What are you getting financing for?</Question>
        <Form onSubmit={(e) => e.preventDefault()}>
          <SelectWrap>
            <Purpose aria-labelledby="question" aria-describedby="error"><option>Select one</option></Purpose>
          </SelectWrap>
          <ErrorText id="error">Please select your loan purpose.</ErrorText>
          <Continue type="submit">Continue</Continue>
        </Form>
      </Main>
      <FooterWrap>
        <Footer>
          {legalLinks.map((l, i) => (
            <React.Fragment key={l}>{i > 0 && " | "}<a href="#">{l}</a></React.Fragment>
          ))}
          <p>
            LendingTree, LLC is a Marketing Lead Generator and is a Duly Licensed Mortgage Broker, as required by law, with its main office located at 1415 Vantage Park Drive, Suite 700, Charlotte, NC 28203, <a href="#">NMLS Unique Identifier #1136</a>. LendingTree, LLC is known as LT Technologies in lieu of true name LendingTree, LLC in NY. LendingTree technology and processes are patented under U.S. Patent Nos. 6,385,594 and 6,611,816 and licensed under U.S. Patent Nos. 5,995,947 and 5,758,328. © 2024 LendingTree, LLC. All Rights Reserved. This site is directed at, and made available to, persons in the continental U.S., Alaska and Hawaii only.
          </p>
        </Footer>
      </FooterWrap>
      <DesktopTaskbar />
    </Screen>
  );
}
